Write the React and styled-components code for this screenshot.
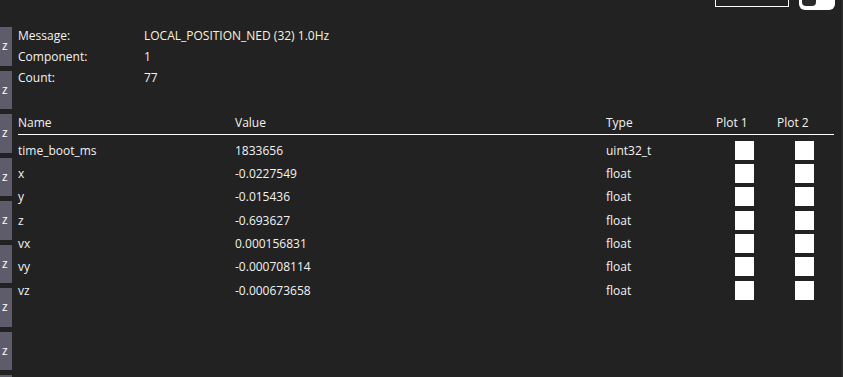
import React from 'react'
import styled, { createGlobalStyle } from 'styled-components'

const GlobalStyle = createGlobalStyle`
	html, body {
		margin: 0;
		padding: 0;
		background: #222222;
		overflow: hidden;
	}
	body {
		font-family: "Open Sans", "Noto Sans", sans-serif;
		font-size: 12px;
		color: #f2f2f2;
	}
`

const Page = styled.div`
	display: flex;
	width: 843px;
	height: 377px;
	box-sizing: border-box;
	border-right: 1px solid #2e2e2e;
	overflow: hidden;
`

const TabStrip = styled.div`
	display: flex;
	flex-direction: column;
	gap: 5px;
	width: 12px;
	padding-top: 27px;
	flex-shrink: 0;
`

const Tab = styled.div`
	display: flex;
	align-items: center;
	height: 38.5px;
	flex-shrink: 0;
	padding-left: 2px;
	background: #5e5c6a;
	color: #ffffff;
	font-size: 12px;
	line-height: 1;
`

const Main = styled.div`
	flex: 1;
	display: flex;
	flex-direction: column;
	padding: 0 9px 0 6px;
`

const Toolbar = styled.div`
	display: flex;
	justify-content: flex-end;
	align-items: flex-end;
	gap: 10px;
	height: 10px;
	margin-bottom: 14.5px;
	margin-right: -1px;
`

const OutlineButton = styled.div`
	width: 74px;
	height: 30px;
	margin-bottom: 3px;
	box-sizing: border-box;
	border: 1px solid #ffffff;
	flex-shrink: 0;
`

const Switch = styled.div`
	display: flex;
	align-items: flex-end;
	width: 36px;
	height: 30px;
	padding: 0 0 4px 3px;
	box-sizing: border-box;
	border-radius: 6px;
	background: #ffffff;
	flex-shrink: 0;
`

const Knob = styled.div`
	width: 14px;
	height: 22px;
	border-radius: 4px;
	background: #2a2a2a;
`

const Info = styled.div`
	display: grid;
	grid-template-columns: 126px auto;
	grid-auto-rows: 21px;
	align-items: center;
	margin-bottom: 22.5px;
`

const Value = styled.span`
	color: ${p => (p.$accent ? '#f8f3de' : '#f2f2f2')};
`

const Columns = '217px 371px 107px 61px 60px'

const HeaderRow = styled.div`
	display: grid;
	grid-template-columns: ${Columns};
	align-items: center;
	height: 24px;
	border-bottom: 1px solid #ffffff;
`

const HeaderCell = styled.div`
	padding-left: ${p => (p.$plot ? '3px' : '0')};
`

const Body = styled.div`
	padding-top: 3.5px;
`

const Row = styled.div`
	display: grid;
	grid-template-columns: ${Columns};
	align-items: center;
	height: 23.33px;
`

const Cell = styled.div`
	display: flex;
	justify-content: ${p => (p.$center ? 'center' : 'flex-start')};
`

const Check = styled.div`
	width: 19px;
	height: 19px;
	margin-left: ${p => (p.$shift ? '1px' : '0')};
	background: #ffffff;
`

const fields = [
	{ name: 'time_boot_ms', value: '1833656', type: 'uint32_t' },
	{ name: 'x', value: '-0.0227549', type: 'float' },
	{ name: 'y', value: '-0.015436', type: 'float' },
	{ name: 'z', value: '-0.693627', type: 'float' },
	{ name: 'vx', value: '0.000156831', type: 'float' },
	{ name: 'vy', value: '-0.000708114', type: 'float' },
	{ name: 'vz', value: '-0.000673658', type: 'float' }
]

const App = () => (
	<>
		<GlobalStyle />
		<Page>
			<TabStrip>
				{Array.from({ length: 9 }).map((_, i) => (
					<Tab key={i}>z</Tab>
				))}
			</TabStrip>
			<Main>
				<Toolbar>
					<OutlineButton />
					<Switch>
						<Knob />
					</Switch>
				</Toolbar>
				<Info>
					<span>Message:</span>
					<Value $accent>LOCAL_POSITION_NED (32) 1.0Hz</Value>
					<span>Component:</span>
					<Value>1</Value>
					<span>Count:</span>
					<Value>77</Value>
				</Info>
				<HeaderRow>
					<HeaderCell>Name</HeaderCell>
					<HeaderCell>Value</HeaderCell>
					<HeaderCell>Type</HeaderCell>
					<HeaderCell $plot>Plot 1</HeaderCell>
					<HeaderCell $plot>Plot 2</HeaderCell>
				</HeaderRow>
				<Body>
					{fields.map(f => (
						<Row key={f.name}>
							<Cell>{f.name}</Cell>
							<Cell>{f.value}</Cell>
							<Cell>{f.type}</Cell>
							<Cell $center><Check $shift /></Cell>
							<Cell $center><Check $shift /></Cell>
						</Row>
					))}
				</Body>
			</Main>
		</Page>
	</>
)

export default App
